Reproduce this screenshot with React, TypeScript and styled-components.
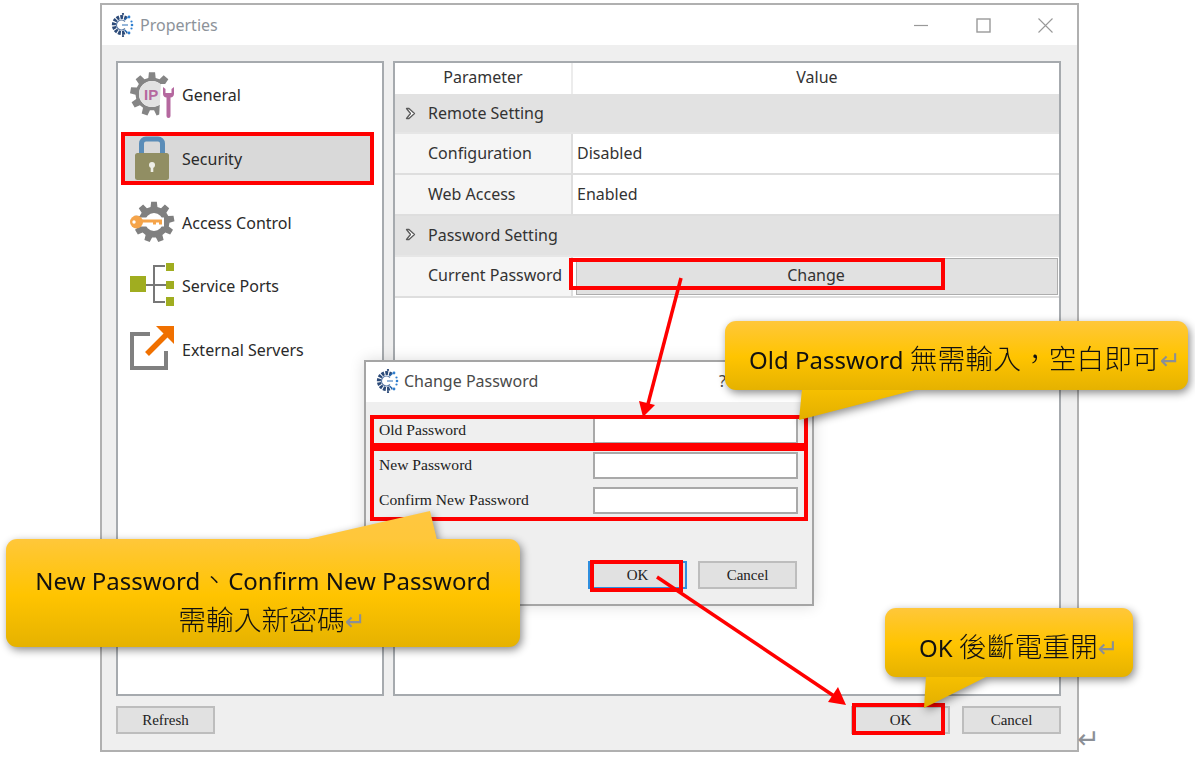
import React from "react";
import styled, { createGlobalStyle } from "styled-components";

const Global = createGlobalStyle`
  html, body { margin: 0; padding: 0; background: #fff; overflow: hidden; }
  * { box-sizing: border-box; }
`;

const UI = `"Noto Sans", "Noto Sans CJK TC", sans-serif`;
const SERIF = `"Liberation Serif", "Noto Sans CJK TC", serif`;

const Stage = styled.div`
  position: relative;
  width: 1195px;
  height: 758px;
  padding: 3px 0 0 100px;
  background: #fff;
  overflow: hidden;
  font-family: ${UI};
`;

const Window = styled.div`
  width: 979px;
  height: 749px;
  display: flex;
  flex-direction: column;
  border: 2px solid #b0b0b0;
  background: #efefef;
`;

const TitleBar = styled.div`
  height: 40px;
  flex: none;
  display: flex;
  align-items: center;
  background: #fff;
  padding: 0 24px 0 8px;
  gap: 6px;
`;

const TitleText = styled.span`
  font-size: 16px;
  color: #8d939a;
  flex: 1;
`;

const WinControls = styled.div`
  display: flex;
  align-items: center;
  gap: 47px;
`;

const Body = styled.div`
  flex: 1;
  display: flex;
  gap: 9px;
  padding: 16px 16px 0 14px;
  min-height: 0;
`;

const SidePanel = styled.div`
  width: 268px;
  height: 635px;
  background: #fff;
  border: 2px solid #a6aaae;
  padding: 9px 12px 0 7px;
  display: flex;
  flex-direction: column;
  gap: 17.75px;
`;

const SideItem = styled.div<{ $active?: boolean }>`
  height: 46px;
  flex: none;
  display: flex;
  align-items: center;
  gap: 7px;
  padding-left: 5px;
  font-size: 16px;
  color: #2a2a2a;
  background: ${(p) => (p.$active ? "#d9d9d9" : "transparent")};
`;

const MainPanel = styled.div`
  width: 668px;
  height: 635px;
  background: #fff;
  border: 2px solid #a6aaae;
  font-size: 16px;
  color: #333;
`;

const Row = styled.div<{ $h: number; $group?: boolean }>`
  display: flex;
  height: ${(p) => p.$h}px;
  align-items: center;
  background: ${(p) => (p.$group ? "#e2e2e2" : "#fff")};
  border-bottom: 2px solid ${(p) => (p.$group ? "#e6e6e6" : "#dedede")};
`;

const HeadRow = styled(Row)`
  border-bottom: none;
  color: #333;
`;

const HeadCell = styled.div<{ $w?: number }>`
  height: 100%;
  display: flex;
  align-items: center;
  justify-content: center;
  padding-bottom: 3px;
  ${(p) => (p.$w ? `width: ${p.$w}px; border-right: 2px solid #ececec;` : "flex: 1; padding-left: 2px;")}
`;

const GroupLabel = styled.div<{ $lift?: number }>`
  display: flex;
  align-items: center;
  padding-left: 10px;
  gap: 12px;
  padding-bottom: ${(p) => p.$lift ?? 0}px;
`;

const KeyCell = styled.div<{ $lift?: number }>`
  width: 178px;
  height: 100%;
  padding-left: 33px;
  padding-bottom: ${(p) => p.$lift ?? 2}px;
  display: flex;
  align-items: center;
  background: #f5f5f5;
  border-right: 2px solid #dedede;
`;

const ValueCell = styled.div`
  flex: 1;
  height: 100%;
  padding: 0 0 2px 4px;
  display: flex;
  align-items: center;
`;

const ChangeCell = styled(ValueCell)`
  padding: 1px 1px 1px 3px;
`;

const ChangeButton = styled.div`
  width: 100%;
  height: 100%;
  display: flex;
  align-items: center;
  justify-content: center;
  background: #e1e1e1;
  border: 1px solid #adadad;
  padding: 0 2px 3px 0;
`;

const Footer = styled.div`
  display: flex;
  align-items: flex-start;
  padding: 10px 16px 0 14px;
  height: 54px;
  flex: none;
`;

const PushButton = styled.div<{ $focus?: boolean }>`
  width: 99px;
  height: 28px;
  display: flex;
  align-items: center;
  justify-content: center;
  background: #e1e1e1;
  border: 2px solid ${(p) => (p.$focus ? "#2f8fdf" : "#bdbdbd")};
  font-family: ${SERIF};
  font-size: 15px;
  color: #222;
`;

const Spacer = styled.div`
  flex: 1;
`;

const FooterGap = styled.div`
  width: 12px;
`;

const Dialog = styled.div`
  position: absolute;
  left: 364px;
  top: 360px;
  width: 450px;
  height: 246px;
  display: flex;
  flex-direction: column;
  background: #efefef;
  border: 2px solid #a5a5a5;
  box-shadow: 0 0 14px rgba(0, 0, 0, 0.14);
`;

const DialogTitle = styled.div`
  height: 40px;
  flex: none;
  display: flex;
  align-items: center;
  gap: 5px;
  padding: 0 0 2px 9px;
  background: #fff;
  font-size: 16px;
  color: #4a4a4a;
`;

const DialogTitleText = styled.span`
  width: 310px;
`;

const DialogForm = styled.div`
  display: grid;
  grid-template-columns: 214px 205px;
  grid-auto-rows: 27px;
  row-gap: 8px;
  padding: 15px 0 0 13px;
  align-items: center;
  font-family: ${SERIF};
  font-size: 15.6px;
  color: #222;
`;

const FieldLabel = styled.span`
  padding-bottom: 2px;
`;

const TextInput = styled.div`
  height: 27px;
  background: #fff;
  border: 2px solid #a9a9a9;
`;

const DialogButtons = styled.div`
  margin-top: auto;
  display: flex;
  justify-content: flex-end;
  gap: 11px;
  padding: 0 15px 15px 0;
`;

const RedBox = styled.div<{ $x: number; $y: number; $w: number; $h: number }>`
  position: absolute;
  left: ${(p) => p.$x}px;
  top: ${(p) => p.$y}px;
  width: ${(p) => p.$w}px;
  height: ${(p) => p.$h}px;
  border: 4px solid #f00;
`;

const ArrowLayer = styled.svg`
  position: absolute;
  left: 0;
  top: 0;
  width: 1195px;
  height: 758px;
  pointer-events: none;
`;

const Callout = styled.div<{ $x: number; $y: number; $w: number; $h: number }>`
  position: absolute;
  left: ${(p) => p.$x}px;
  top: ${(p) => p.$y}px;
  width: ${(p) => p.$w}px;
  height: ${(p) => p.$h}px;
  filter: drop-shadow(2px 3px 4px rgba(0, 0, 0, 0.45));
`;

const CalloutBody = styled.div<{ $pad?: number; $top: number }>`
  position: relative;
  width: 100%;
  height: 100%;
  border-radius: 11px;
  background: linear-gradient(180deg, #ffc73a 0%, #ffc400 52%, #e5b200 100%);
  color: #111;
  font-size: 24px;
  font-family: ${UI};
  display: flex;
  flex-direction: column;
  justify-content: center;
  line-height: 40px;
  white-space: nowrap;
  padding-top: ${(p) => p.$top}px;
  padding-left: ${(p) => p.$pad ?? 0}px;
  align-items: ${(p) => (p.$pad ? "flex-start" : "center")};
`;

const SecondLine = styled.span`
  padding-left: 18px;
`;

const Cjk = styled.span`
  font-size: 27.8px;
  font-weight: 300;
  line-height: 0;
`;

const Tail = styled.svg`
  position: absolute;
  left: 0;
  top: 0;
  overflow: visible;
`;

const ReturnMark = styled.span`
  color: #8b8f96;
  font-family: "DejaVu Sans", sans-serif;
  font-size: 25px;
  line-height: 0;
`;

const PageReturn = styled(ReturnMark)`
  position: absolute;
  left: 1077px;
  top: 723px;
  font-size: 27px;
  line-height: 32px;
`;

function gearPath(cx: number, cy: number, ro: number, ri: number, teeth: number, hole: number) {
  const pts: string[] = [];
  const step = (Math.PI * 2) / teeth;
  for (let i = 0; i < teeth; i++) {
    const a = i * step - Math.PI / 2;
    const at = (r: number, t: number) =>
      `${(cx + r * Math.cos(a + t)).toFixed(2)} ${(cy + r * Math.sin(a + t)).toFixed(2)}`;
    pts.push(at(ri, -step * 0.32), at(ro, -step * 0.2), at(ro, step * 0.2), at(ri, step * 0.32));
  }
  const h = `M${cx - hole} ${cy}a${hole} ${hole} 0 1 0 ${hole * 2} 0a${hole} ${hole} 0 1 0 ${-hole * 2} 0Z`;
  return `M${pts.join("L")}Z${h}`;
}

const AppLogo = () => (
  <svg width="24" height="24" viewBox="0 0 24 24">
    <path d="M16.500 5.500A8 8 0 1 0 16.500 18.500" fill="none" stroke="#2c4a78" strokeWidth="4" strokeDasharray="2.600 1.100" />
    <path d="M15 8.500A5 5 0 1 0 15 15.500" fill="none" stroke="#5d7ba6" strokeWidth="1.200" />
    <path d="M12 12h6M14.500 7l3-2.500M14.500 17l3 2.500" stroke="#2c6fb5" strokeWidth="1.100" />
    <circle cx="19" cy="4" r="1.400" fill="#2f7fd0" />
    <circle cx="21.500" cy="8.500" r="1.100" fill="#2f7fd0" />
    <circle cx="22" cy="12" r="1.300" fill="#2f7fd0" />
    <circle cx="21.500" cy="15.500" r="1.100" fill="#2f7fd0" />
    <circle cx="19" cy="20" r="1.400" fill="#2f7fd0" />
    <circle cx="13" cy="23" r="1.100" fill="#2c4a78" />
    <circle cx="13" cy="1" r="1.100" fill="#2c4a78" />
  </svg>
);

const GeneralIcon = () => (
  <svg width="45" height="46" viewBox="0 0 45 46" overflow="visible">
    <path fillRule="evenodd" d={gearPath(22, 22, 22, 16.500, 9, 13)} fill="#858585" />
    <circle cx="22" cy="22" r="13" fill="#e2e2e2" />
    <path d="M31 12h14v34H29z" fill="#fff" />
    <text x="14" y="28" fontFamily="Liberation Sans, sans-serif" fontWeight="700" fontSize="15" fill="#b5689f">IP</text>
    <path d="M33 15v7a4 4 0 0 0 3.500 3.600V44a1.800 1.800 0 0 0 4 0V25.600a4 4 0 0 0 3.500-3.600v-7l-2.500 2v4h-6v-4z" fill="#b5689f" />
  </svg>
);

const LockIcon = () => (
  <svg width="45" height="46" viewBox="0 0 45 46">
    <path d="M11.500 18V7.500A4.500 4.500 0 0 1 16 3h12A4.500 4.500 0 0 1 32.500 7.500V18" fill="none" stroke="#5b8db8" strokeWidth="5" />
    <rect x="5" y="17" width="34" height="27" rx="2.500" fill="#918e63" />
    <circle cx="22" cy="29" r="3" fill="#eeeee6" />
    <rect x="20.700" y="29" width="2.600" height="7" fill="#eeeee6" />
  </svg>
);

const AccessIcon = () => (
  <svg width="45" height="46" viewBox="0 0 45 46">
    <path fillRule="evenodd" d={gearPath(24, 22, 20.500, 15.500, 9, 9)} fill="#808080" />
    <path d="M0 22h34" stroke="#fff" strokeWidth="9" />
    <circle cx="6.500" cy="22" r="6.500" fill="#f5a44a" />
    <circle cx="4" cy="22" r="1.700" fill="#fff" />
    <path d="M12 19.500h20v5h-3v-2h-3v2h-3v-2H12z" fill="#f5a44a" />
  </svg>
);

const PortsIcon = () => (
  <svg width="45" height="46" viewBox="0 0 45 46">
    <rect x="0" y="13" width="16" height="16" fill="#a0ad20" />
    <path d="M16 22h20M35 3H24v36h11" fill="none" stroke="#777" strokeWidth="2" />
    <rect x="36" y="0" width="8" height="8" fill="#a0ad20" />
    <rect x="36" y="18" width="8" height="8" fill="#a0ad20" />
    <rect x="36" y="34" width="8" height="9" fill="#a0ad20" />
  </svg>
);

const ExternalIcon = () => (
  <svg width="45" height="46" viewBox="0 0 45 46" overflow="visible">
    <path d="M20 7H2v34h34V24" fill="none" stroke="#808080" strokeWidth="4" />
    <path d="M17 27 L36 8" stroke="#f07000" strokeWidth="5.500" />
    <path d="M26 -1h18v18z" fill="#f07000" />
  </svg>
);

const Chevron = () => (
  <svg width="11" height="13" viewBox="0 0 11 13">
    <path d="M1.500 1.500 H4 L9.500 6.500 L4 11.500 H1.500 L5.500 6.500 Z" fill="#fff" stroke="#5a5a5a" strokeWidth="1.300" strokeLinejoin="round" />
  </svg>
);

const Minimize = () => (
  <svg width="15" height="15" viewBox="0 0 15 15"><path d="M0 7.500h14" stroke="#999" strokeWidth="1.200" /></svg>
);
const Maximize = () => (
  <svg width="15" height="15" viewBox="0 0 15 15"><rect x="1" y="1" width="13" height="13" fill="none" stroke="#999" strokeWidth="1.400" /></svg>
);
const CloseX = () => (
  <svg width="15" height="15" viewBox="0 0 15 15"><path d="M0.500 0.500l14 14M14.500 0.500l-14 14" stroke="#999" strokeWidth="1.100" /></svg>
);

const TailFill = ({ id, from, to }: { id: string; from: string; to: string }) => (
  <defs>
    <linearGradient id={id} x1="0" y1="0" x2="0" y2="1">
      <stop offset="0" stopColor={from} />
      <stop offset="1" stopColor={to} />
    </linearGradient>
  </defs>
);

const items = [
  { label: "General", icon: <GeneralIcon /> },
  { label: "Security", icon: <LockIcon />, active: true },
  { label: "Access Control", icon: <AccessIcon /> },
  { label: "Service Ports", icon: <PortsIcon /> },
  { label: "External Servers", icon: <ExternalIcon /> },
];

export default function App() {
  return (
    <Stage>
      <Global />
      <Window>
        <TitleBar>
          <AppLogo />
          <TitleText>Properties</TitleText>
          <WinControls>
            <Minimize />
            <Maximize />
            <CloseX />
          </WinControls>
        </TitleBar>
        <Body>
          <SidePanel>
            {items.map((it) => (
              <SideItem key={it.label} $active={it.active}>
                {it.icon}
                <span>{it.label}</span>
              </SideItem>
            ))}
          </SidePanel>
          <MainPanel>
            <HeadRow $h={31}>
              <HeadCell $w={178}>Parameter</HeadCell>
              <HeadCell>Value</HeadCell>
            </HeadRow>
            <Row $h={40} $group>
              <GroupLabel><Chevron />Remote Setting</GroupLabel>
            </Row>
            <Row $h={41}>
              <KeyCell>Configuration</KeyCell>
              <ValueCell>Disabled</ValueCell>
            </Row>
            <Row $h={41}>
              <KeyCell>Web Access</KeyCell>
              <ValueCell>Enabled</ValueCell>
            </Row>
            <Row $h={41} $group>
              <GroupLabel $lift={2}><Chevron />Password Setting</GroupLabel>
            </Row>
            <Row $h={41}>
              <KeyCell $lift={3}>Current Password</KeyCell>
              <ChangeCell><ChangeButton>Change</ChangeButton></ChangeCell>
            </Row>
          </MainPanel>
        </Body>
        <Footer>
          <PushButton>Refresh</PushButton>
          <Spacer />
          <PushButton>OK</PushButton>
          <FooterGap />
          <PushButton>Cancel</PushButton>
        </Footer>
      </Window>

      <Dialog>
        <DialogTitle>
          <AppLogo />
          <DialogTitleText>Change Password</DialogTitleText>
          <span>?</span>
        </DialogTitle>
        <DialogForm>
          <FieldLabel>Old Password</FieldLabel>
          <TextInput />
          <FieldLabel>New Password</FieldLabel>
          <TextInput />
          <FieldLabel>Confirm New Password</FieldLabel>
          <TextInput />
        </DialogForm>
        <DialogButtons>
          <PushButton $focus>OK</PushButton>
          <PushButton>Cancel</PushButton>
        </DialogButtons>
      </Dialog>

      <RedBox $x={121} $y={132} $w={253} $h={53} />
      <RedBox $x={569} $y={258} $w={376} $h={32} />
      <RedBox $x={370} $y={415} $w={438} $h={32} />
      <RedBox $x={370} $y={447} $w={438} $h={74} />
      <RedBox $x={590} $y={560} $w={93} $h={32} />
      <RedBox $x={852} $y={703} $w={93} $h={32} />

      <ArrowLayer viewBox="0 0 1195 758">
        <path d="M681 278 L648 404" stroke="#f00" strokeWidth="3.500" fill="none" />
        <path d="M639 401 L655 405 L643 417 Z" fill="#f00" />
        <path d="M657 577 L834 696" stroke="#f00" strokeWidth="3.500" fill="none" />
        <path d="M838 687 L828 702 L846 705 Z" fill="#f00" />
      </ArrowLayer>

      <Callout $x={725} $y={321} $w={463} $h={69}>
        <Tail width="463" height="69">
          <TailFill id="t1" from="#f7c000" to="#e2af00" />
          <path d="M77 68 L74 99 L194 68 Z" fill="url(#t1)" />
        </Tail>
        <CalloutBody $pad={24} $top={8}>
          <span>Old Password <Cjk>無需輸入，空白即可</Cjk><ReturnMark>↵</ReturnMark></span>
        </CalloutBody>
      </Callout>

      <Callout $x={6} $y={539} $w={514} $h={108}>
        <Tail width="514" height="108">
          <TailFill id="t2" from="#ffc740" to="#ffc73a" />
          <path d="M298 1 L424 -28 L431 1 Z" fill="url(#t2)" />
        </Tail>
        <CalloutBody $top={15}>
          <span>New Password<Cjk>、</Cjk>Confirm New Password</span>
          <SecondLine><Cjk>需輸入新密碼</Cjk><ReturnMark>↵</ReturnMark></SecondLine>
        </CalloutBody>
      </Callout>

      <Callout $x={885} $y={608} $w={248} $h={69}>
        <Tail width="248" height="69">
          <TailFill id="t3" from="#f7c000" to="#e2af00" />
          <path d="M41 68 L39 100 L103 68 Z" fill="url(#t3)" />
        </Tail>
        <CalloutBody $pad={34} $top={10}>
          <span>OK <Cjk>後斷電重開</Cjk><ReturnMark>↵</ReturnMark></span>
        </CalloutBody>
      </Callout>

      <PageReturn>↵</PageReturn>
    </Stage>
  );
}
